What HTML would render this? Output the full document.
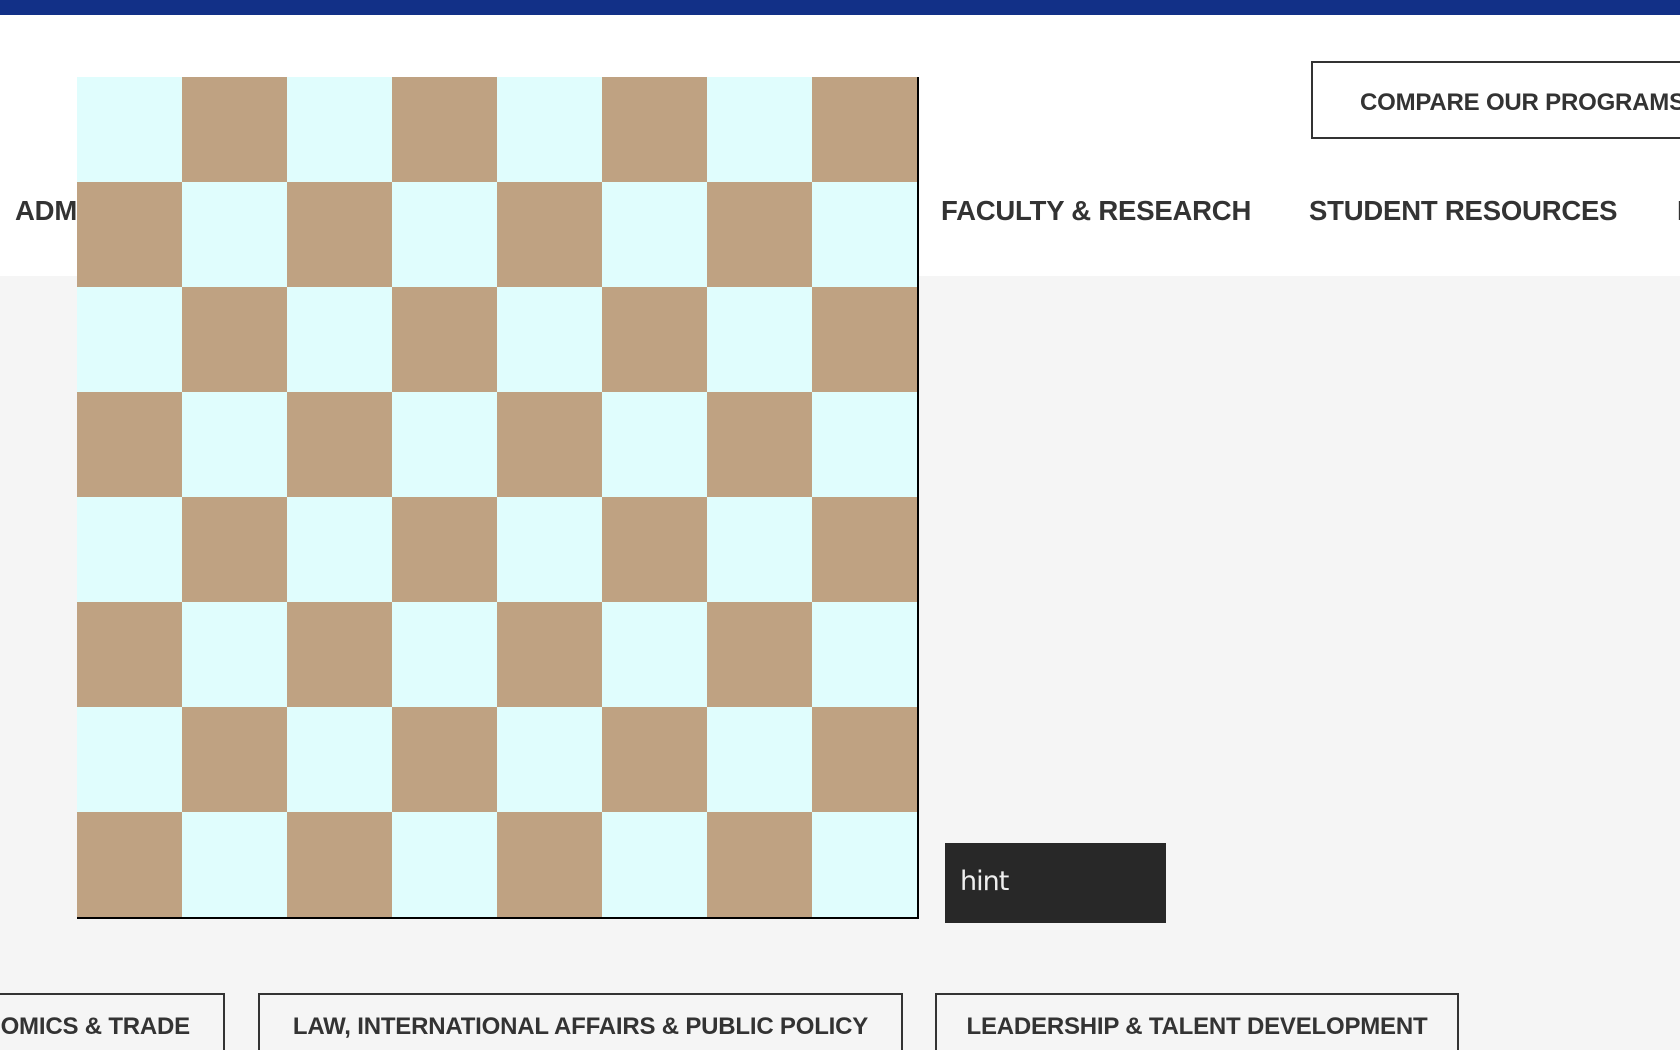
<!DOCTYPE html>
<html style="height:1050px;overflow:hidden"><head><meta charset="utf-8"><style>
*{margin:0;padding:0;box-sizing:border-box}
body{width:1680px;height:1050px;overflow:hidden;background:#f5f5f5;position:relative;font-family:"Liberation Sans",sans-serif;color:#333}
.top{position:absolute;left:0;top:0;width:1680px;height:15px;background:#123087}
.hdr{position:absolute;left:0;top:15px;width:1680px;height:261px;background:#fff}
.nav{position:absolute;top:195px;font-weight:bold;font-size:27.5px;letter-spacing:-0.2px;white-space:nowrap;line-height:32px}
.cmp{position:absolute;left:1311px;top:61px;width:400px;height:78px;border:2px solid #333;font-weight:bold;font-size:24px;line-height:80px;padding-left:47px;white-space:nowrap;letter-spacing:-0.2px}
.board{position:absolute;left:77px;top:77px;width:842px;height:842px;display:grid;grid-template-columns:repeat(8,105px);grid-template-rows:repeat(8,105px);border-right:2px solid #000;border-bottom:2px solid #000}
.l{background:#e0fdfd}.d{background:#bfa282}
.hint{position:absolute;left:945px;top:843px;width:221px;height:80px;background:#282828;color:#eee;font-family:"DejaVu Sans",sans-serif;font-size:27px;line-height:78px;padding-left:15px;letter-spacing:-1px}
.btn{position:absolute;top:993px;height:57px;border:2px solid #333;border-bottom:none;font-weight:bold;font-size:24px;line-height:64px;white-space:nowrap;letter-spacing:-0.2px;text-align:center;overflow:hidden}
</style></head><body>
<div class="top"></div>
<div class="hdr"></div>
<div class="nav" style="left:15px">ADMISSIONS</div>
<div class="nav" style="left:941px">FACULTY &amp; RESEARCH</div>
<div class="nav" style="left:1309px">STUDENT RESOURCES</div>
<div class="nav" style="left:1677px">NEWS</div>
<div class="cmp">COMPARE OUR PROGRAMS</div>
<div class="board">
<div class="l"></div><div class="d"></div><div class="l"></div><div class="d"></div><div class="l"></div><div class="d"></div><div class="l"></div><div class="d"></div>
<div class="d"></div><div class="l"></div><div class="d"></div><div class="l"></div><div class="d"></div><div class="l"></div><div class="d"></div><div class="l"></div>
<div class="l"></div><div class="d"></div><div class="l"></div><div class="d"></div><div class="l"></div><div class="d"></div><div class="l"></div><div class="d"></div>
<div class="d"></div><div class="l"></div><div class="d"></div><div class="l"></div><div class="d"></div><div class="l"></div><div class="d"></div><div class="l"></div>
<div class="l"></div><div class="d"></div><div class="l"></div><div class="d"></div><div class="l"></div><div class="d"></div><div class="l"></div><div class="d"></div>
<div class="d"></div><div class="l"></div><div class="d"></div><div class="l"></div><div class="d"></div><div class="l"></div><div class="d"></div><div class="l"></div>
<div class="l"></div><div class="d"></div><div class="l"></div><div class="d"></div><div class="l"></div><div class="d"></div><div class="l"></div><div class="d"></div>
<div class="d"></div><div class="l"></div><div class="d"></div><div class="l"></div><div class="d"></div><div class="l"></div><div class="d"></div><div class="l"></div>
</div>
<div class="hint">hint</div>
<div class="btn" style="left:-140px;width:365px;text-align:right;padding-right:33px">ECONOMICS &amp; TRADE</div>
<div class="btn" style="left:258px;width:645px">LAW, INTERNATIONAL AFFAIRS &amp; PUBLIC POLICY</div>
<div class="btn" style="left:935px;width:524px">LEADERSHIP &amp; TALENT DEVELOPMENT</div>
</body></html>
